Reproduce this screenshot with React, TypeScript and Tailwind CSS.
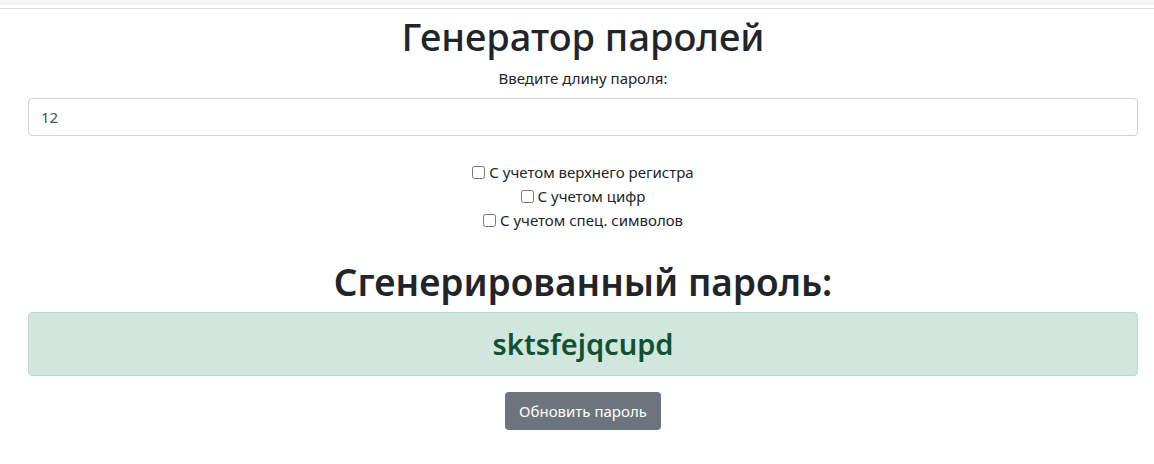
import React, { useState } from 'react';

const options = [
    'С учетом верхнего регистра',
    'С учетом цифр',
    'С учетом спец. символов',
];

export default function App() {
    const [length, setLength] = useState('12');

    return (
        <div className="min-h-[464px] bg-white text-[#212529]" style={{ fontFamily: '"Noto Sans", "Open Sans", sans-serif' }}>
            <div className="h-[5px] bg-[#f1f3f4]" />
            <div className="h-[4px] bg-white border-b border-[#dadce0]" />
            <div className="ml-[28px] w-[1110px] flex flex-col items-center">
                <h1 className="mt-[3px] text-[38px] leading-[48px] font-medium">Генератор паролей</h1>
                <label htmlFor="len" className="mt-[8px] text-[15px] leading-[20px]">
                    Введите длину пароля:
                </label>
                <input
                    id="len"
                    type="text"
                    value={length}
                    onChange={(e) => setLength(e.target.value)}
                    className="mt-[10px] w-full h-[38px] px-[12px] rounded-[4px] border border-[#ced4da] text-[15px] text-[#495057] outline-none"
                />
                <div className="mt-[24px] flex flex-col items-center text-[15px] leading-[24px]">
                    {options.map((o) => (
                        <label key={o} className="flex items-center gap-[4px]">
                            <input type="checkbox" className="w-[13px] h-[13px]" />
                            {o}
                        </label>
                    ))}
                </div>
                <h2 className="mt-[26px] text-[37px] leading-[48px] font-semibold">Сгенерированный пароль:</h2>
                <div className="mt-[6px] w-full h-[64px] rounded-[4px] border border-[#badbcc] bg-[#d1e7dd] flex items-center justify-center">
                    <span className="text-[29px] font-semibold text-[#0f5132]">sktsfejqcupd</span>
                </div>
                <button className="mt-[16px] h-[38px] px-[14px] rounded-[4px] bg-[#6c757d] text-white text-[15px]">
                    Обновить пароль
                </button>
            </div>
        </div>
    );
}
